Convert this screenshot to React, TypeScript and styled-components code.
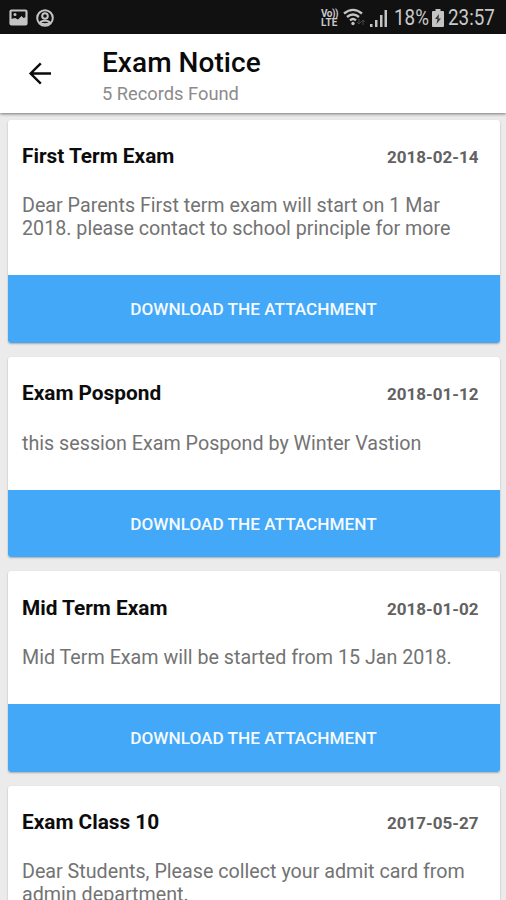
import React from 'react';
import styled, { createGlobalStyle } from 'styled-components';

const GlobalStyle = createGlobalStyle`
  * { box-sizing: border-box; }
  body { margin: 0; overflow: hidden; font-family: Roboto, sans-serif; background: #ebebeb; }
`;

const Screen = styled.main`
  display: flex;
  flex-direction: column;
  width: 506px;
  height: 900px;
  overflow: hidden;
  background: #ebebec;
`;

const StatusBar = styled.div`
  display: flex;
  flex: none;
  align-items: center;
  justify-content: space-between;
  height: 34px;
  padding: 1px 11px 0 9px;
  background: #111;
  color: #c9c9c9;
`;

const StatusGroup = styled.div<{ $gap: number }>`
  display: flex;
  align-items: center;
  gap: ${(p) => p.$gap}px;
  svg { display: block; flex: none; }
`;

const StatusText = styled.span<{ $width: number }>`
  width: ${(p) => p.$width}px;
  font-size: 21.5px;
  line-height: 24px;
  white-space: nowrap;
  transform: scaleX(0.875);
  transform-origin: left;
`;

const VoLte = styled.div`
  display: flex;
  flex-direction: column;
  width: 18px;
  font-size: 10px;
  font-weight: 700;
  white-space: nowrap;
`;

const NetworkLine = styled.span<{ $spacing: number }>`
  height: 9px;
  line-height: 9px;
  letter-spacing: ${(p) => p.$spacing}px;
`;

const AppBar = styled.header`
  display: flex;
  flex: none;
  height: 79px;
  padding-left: 26px;
  background: #fff;
  box-shadow: 0 1px 3px rgba(0, 0, 0, 0.5);
  z-index: 1;
`;

const BackButton = styled.button`
  width: 76px;
  height: 79px;
  padding: 0;
  border: 0;
  background: none;
  text-align: left;
  svg { display: block; }
`;

const Heading = styled.div`
  padding-top: 12px;
`;

const Title = styled.h1`
  margin: 0;
  font-size: 28px;
  font-weight: 500;
  line-height: 34px;
  letter-spacing: 0.05px;
  color: #0a0a0a;
`;

const Subtitle = styled.p`
  margin: 3px 0 0;
  font-size: 18.3px;
  line-height: 22px;
  color: #8b8b8b;
`;

const List = styled.section`
  display: flex;
  flex-direction: column;
  gap: 14px;
  padding: 6.5px 6.5px 0 7.5px;
`;

const Card = styled.article`
  flex: none;
  border-radius: 3px;
  background: #fff;
  box-shadow: 0 1px 2px rgba(0, 0, 0, 0.28);
  overflow: hidden;
`;

const CardBody = styled.div`
  padding: 23.4px 21px 35.2px 14.5px;
`;

const CardHead = styled.div`
  display: flex;
  align-items: baseline;
  justify-content: space-between;
  height: 26px;
  line-height: 26px;
`;

const CardTitle = styled.h2`
  margin: 0;
  font-size: 20.8px;
  font-weight: 700;
  color: #0c0c0c;
`;

const CardDate = styled.time`
  font-size: 17px;
  font-weight: 700;
  color: #626262;
`;

const CardText = styled.p`
  margin: 25.2px 0 0;
  font-size: 19.7px;
  line-height: 23px;
  color: #737373;
  white-space: pre;
`;

const DownloadButton = styled.button`
  display: block;
  width: 100%;
  height: 67.7px;
  padding: 0;
  border: 0;
  background: #42a8f7;
  color: #f4faff;
  font-family: inherit;
  font-size: 17.2px;
  font-weight: 500;
`;

const notices = [
  { title: 'First Term Exam', date: '2018-02-14', text: 'Dear Parents First term exam will start on 1 Mar\n2018. please contact to school principle for more' },
  { title: 'Exam Pospond', date: '2018-01-12', text: 'this session Exam Pospond by Winter Vastion' },
  { title: 'Mid Term Exam', date: '2018-01-02', text: 'Mid Term Exam will be started from 15 Jan 2018.' },
  { title: 'Exam Class 10', date: '2017-05-27', text: 'Dear Students, Please collect your admit card from\nadmin department.' },
];

const PictureIcon = () => (
  <svg width="19" height="17" viewBox="0 0 19 17">
    <rect x="1.500" y="1.500" width="16" height="14" rx="1" fill="none" stroke="#c4c4c4" strokeWidth="2.200" />
    <path d="M2 10l4-1 3 1.500 3.500-3.500 2 2 2.500-1v8H2z" fill="#c4c4c4" />
    <circle cx="6" cy="5.500" r="1.500" fill="#c4c4c4" />
  </svg>
);

const PersonIcon = () => (
  <svg width="18" height="18" viewBox="0 0 18 18" fill="none" stroke="#c4c4c4" strokeWidth="2">
    <circle cx="9" cy="9" r="7.800" />
    <circle cx="9" cy="7" r="2.800" />
    <path d="M4 13.500c1-2.500 9-2.500 10 0-2 2.200-8 2.200-10 0z" />
  </svg>
);

const WifiIcon = () => (
  <svg width="23" height="19" viewBox="0 0 23 19" fill="none" stroke="#c4c4c4" strokeWidth="2.300">
    <path d="M1 5.500Q10 -1.800 19 5.500M4 9q6-5 12 0M7 12.300q3-2.500 6 0" />
    <circle cx="10" cy="15.500" r="1.700" fill="#c4c4c4" stroke="none" />
    <path d="M16 11v5m-2-2 2 2 2-2M20 17v-5m-2 2 2-2 2 2" stroke="#444" strokeWidth="1" />
  </svg>
);

const SignalIcon = () => (
  <svg width="20" height="18" viewBox="0 0 20 18" fill="#c4c4c4">
    <path d="M0 15h2.500v3H0zM5 11h2.500v7H5zM10 6h2.500v12H10zM14.500 1H17v17h-2.500z" />
  </svg>
);

const BatteryIcon = () => (
  <svg width="12" height="18" viewBox="0 0 12 18">
    <path d="M3.500 0h5v2H11q1 0 1 1v14q0 1-1 1H1q-1 0-1-1V3q0-1 1-1h2.500z" fill="#c4c4c4" />
    <path d="M7 5 3 10h2.500L4.500 15l4.500-5.500H6.500z" fill="#333" />
  </svg>
);

const BackIcon = () => (
  <svg width="28" height="79" viewBox="0 0 28 79" fill="none" stroke="#0b0b0b" strokeWidth="2.400">
    <path d="M25 39.500H5M14.800 29.300 4.600 39.500 14.800 49.700" />
  </svg>
);

export default function App() {
  return (
    <>
      <GlobalStyle />
      <Screen>
        <StatusBar>
          <StatusGroup $gap={8}>
            <PictureIcon />
            <PersonIcon />
          </StatusGroup>
          <StatusGroup $gap={4}>
            <VoLte>
              <NetworkLine $spacing={-0.5}>Vo))</NetworkLine>
              <NetworkLine $spacing={0.1}>LTE</NetworkLine>
            </VoLte>
            <WifiIcon />
            <SignalIcon />
            <StatusText $width={34}>18%</StatusText>
            <BatteryIcon />
            <StatusText $width={47}>23:57</StatusText>
          </StatusGroup>
        </StatusBar>
        <AppBar>
          <BackButton aria-label="Back"><BackIcon /></BackButton>
          <Heading>
            <Title>Exam Notice</Title>
            <Subtitle>5 Records Found</Subtitle>
          </Heading>
        </AppBar>
        <List>
          {notices.map((n) => (
            <Card key={n.date}>
              <CardBody>
                <CardHead>
                  <CardTitle>{n.title}</CardTitle>
                  <CardDate>{n.date}</CardDate>
                </CardHead>
                <CardText>{n.text}</CardText>
              </CardBody>
              <DownloadButton>DOWNLOAD THE ATTACHMENT</DownloadButton>
            </Card>
          ))}
        </List>
      </Screen>
    </>
  );
}
